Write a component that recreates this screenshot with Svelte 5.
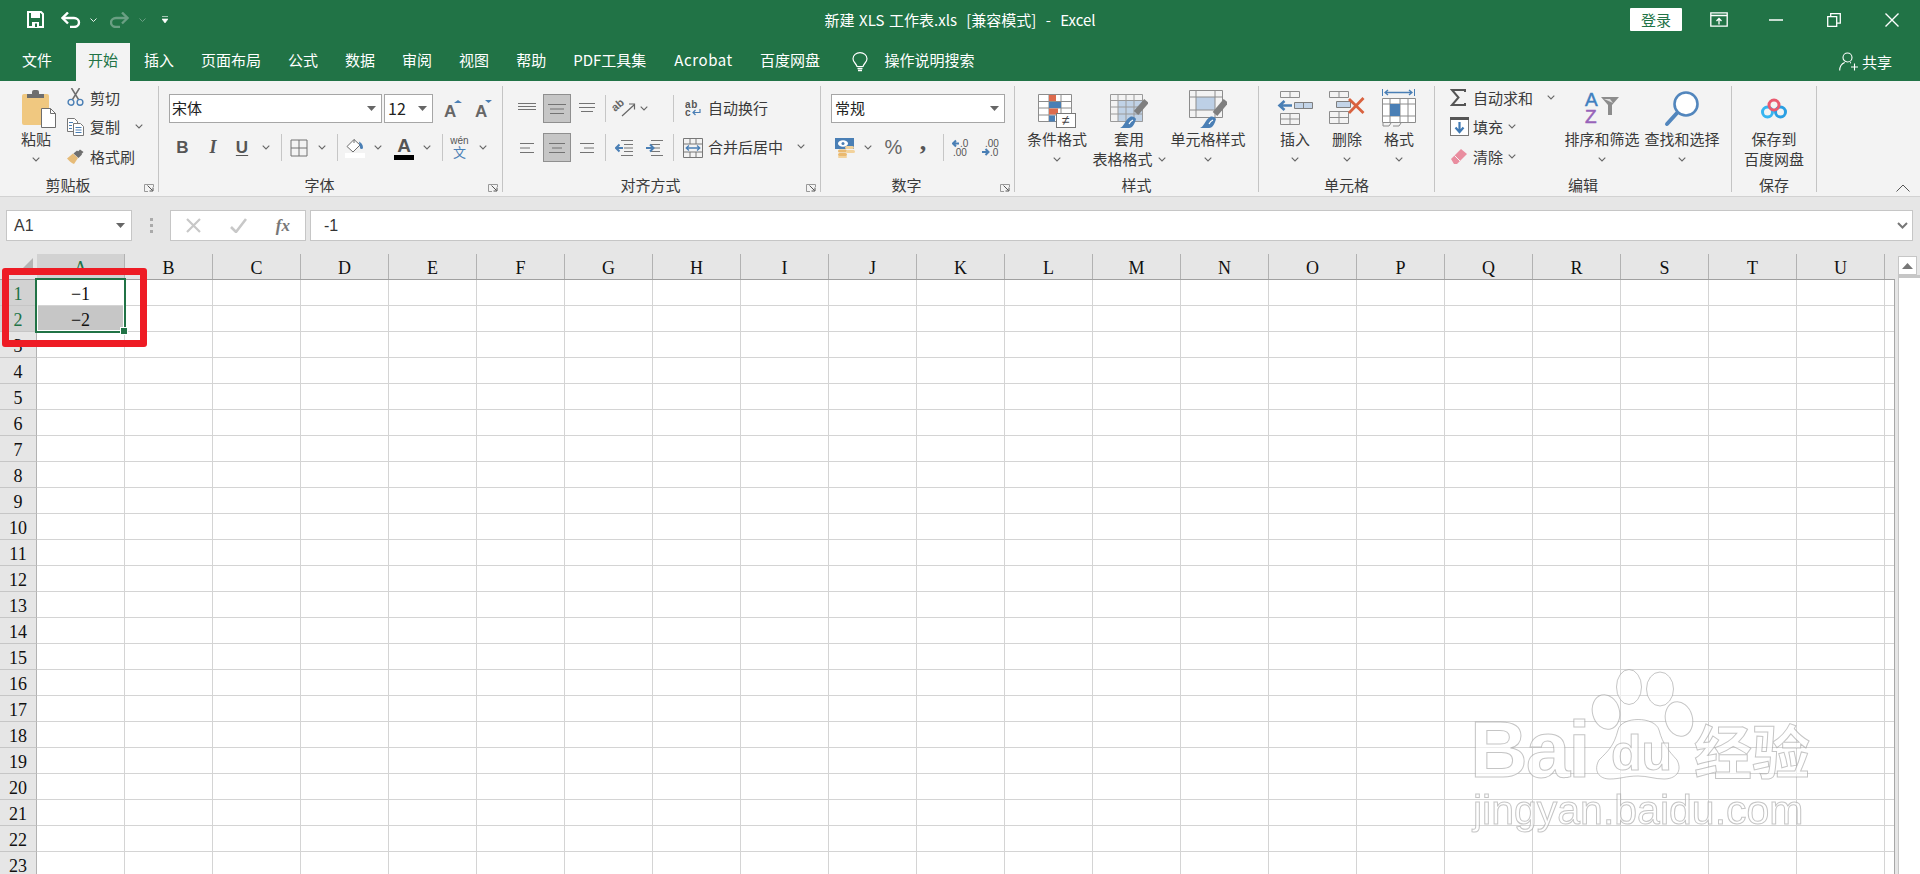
<script>
  const tabs = ["插入", "页面布局", "公式", "数据", "审阅", "视图", "帮助", "PDF工具集", "Acrobat", "百度网盘"];
  const cols = "ABCDEFGHIJKLMNOPQRSTU".split("");
  const rows = Array.from({ length: 23 }, (_, i) => i + 1);

  const lineSets = {
    top: [[0, 18, 1.5], [0, 18, 4.5], [0, 18, 7.5]],
    mid: [[0, 18, 2.5], [2, 16, 7], [2, 16, 11.5]],
    bot: [[1, 17, 1.5], [1, 17, 5.5], [3, 15, 9.5]],
    left: [[2, 16, 2.5], [2, 12, 7], [2, 16, 11.5]],
    center: [[1, 17, 2.5], [4, 14, 7], [1, 17, 11.5]],
    right: [[2, 16, 2.5], [6, 16, 7], [2, 16, 11.5]]
  };
</script>

{#snippet chev()}
  <svg class="chev" width="8" height="5" viewBox="0 0 8 5"><path d="M.7.7 4 4 7.3.7" fill="none" stroke="#666" stroke-width="1.1" /></svg>
{/snippet}

{#snippet caret()}
  <svg width="9" height="5" viewBox="0 0 9 5"><path d="M0 0h9L4.5 5z" fill="#666" /></svg>
{/snippet}

{#snippet launcher()}
  <svg class="launcher" width="10" height="8" viewBox="0 0 10 8"><path d="M9.5 3V.5H.5v7H4" fill="none" stroke="#999" /><path d="M3.5 1.5 8.5 6.500M9 3.500V7H5.500" fill="none" stroke="#555" /></svg>
{/snippet}

{#snippet lines(kind)}
  <svg width="18" height="14" viewBox="0 0 18 14">
    {#each lineSets[kind] as [a, b, y]}
      <path d="M{a} {y}H{b}" stroke="#737373" />
    {/each}
  </svg>
{/snippet}

<div class="app">
  <header class="titlebar">
    <div class="qat">
      <svg class="q-save" width="17" height="17" viewBox="0 0 17 17"><path d="M1 1h13l2 2v13H1z" fill="none" stroke="#fff" stroke-width="2" /><path d="M4 1h9v6H4z" fill="#fff" /><path d="M5 11h7v5H5z" fill="#fff" /><path d="M8 12.500h2V16H8z" fill="#217346" /></svg>
      <svg class="q-undo" width="20" height="16" viewBox="0 0 20 16"><path d="M2 6h11a5 4.500 0 0 1 0 9H9" fill="none" stroke="#fff" stroke-width="2.400" /><path d="M7 .5 1.500 6 7 11.500" fill="none" stroke="#fff" stroke-width="2.400" /></svg>
      <svg class="q-c1" width="7" height="4" viewBox="0 0 7 4"><path d="M.5.5 3.500 3.500 6.500.5" fill="none" stroke="#e6f0ea" /></svg>
      <svg class="q-redo" width="19" height="16" viewBox="0 0 19 16"><path d="M17 6H6a5 4.500 0 0 0 0 9h4" fill="none" stroke="#6a9f83" stroke-width="2.400" /><path d="M12 .5 17.500 6 12 11.500" fill="none" stroke="#6a9f83" stroke-width="2.400" /></svg>
      <svg class="q-c2" width="7" height="4" viewBox="0 0 7 4"><path d="M.5.5 3.500 3.500 6.500.5" fill="none" stroke="#6a9f83" /></svg>
      <svg class="q-more" width="6" height="7" viewBox="0 0 6 7"><path d="M0 .5h6M0 3h6L3 7z" fill="#fff" stroke="#fff" stroke-width=".6" /></svg>
    </div>
    <div class="doc-title">新建 XLS 工作表.xls&nbsp; [兼容模式]&nbsp; -&nbsp; Excel</div>
    <div class="win">
      <button class="login">登录</button>
      <svg class="w-ribbon" width="18" height="15" viewBox="0 0 18 15"><path d="M.8.8h16.400v13.400H.8z" fill="none" stroke="#fff" stroke-width="1.300" /><path d="M.8 3.500h16.400" stroke="#fff" stroke-width="1.500" /><path d="M9 12.500V6.500M6.500 9 9 6.500 11.500 9" fill="none" stroke="#fff" stroke-width="1.300" /></svg>
      <svg class="w-min" width="14" height="2" viewBox="0 0 14 2"><path d="M0 1h14" stroke="#fff" stroke-width="1.500" /></svg>
      <svg class="w-max" width="14" height="14" viewBox="0 0 14 14"><path d="M.7 3.700h9v9.600h-9z" fill="none" stroke="#fff" stroke-width="1.300" /><path d="M3.700 3.500V.7h9.600v9.500h-3.400" fill="none" stroke="#fff" stroke-width="1.300" /></svg>
      <svg class="w-close" width="14" height="14" viewBox="0 0 14 14"><path d="M.5.5l13 13M13.500.5l-13 13" stroke="#fff" stroke-width="1.400" /></svg>
    </div>
  </header>

  <nav class="tabs">
    <div class="tab first">文件</div>
    <div class="tab active">开始</div>
    {#each tabs as t}
      <div class="tab" class:wide={t === "Acrobat"}>{t}</div>
    {/each}
    <svg class="bulb" width="16" height="21" viewBox="0 0 16 21"><path d="M5 14.500C4.500 11.500 1 10.500 1 6.800a7 6.200 0 0 1 14 0c0 3.700-3.500 4.700-4 7.700z" fill="none" stroke="#fff" stroke-width="1.200" /><path d="M5.500 16.500h5M6 18.500h4" stroke="#fff" stroke-width="1.300" /></svg>
    <div class="search">操作说明搜索</div>
    <div class="share">
      <svg width="20" height="19" viewBox="0 0 20 19"><circle cx="8.500" cy="5.500" r="4.500" fill="none" stroke="#fff" stroke-width="1.100" /><path d="M.7 18.500c0-4.500 2.500-7 5-8M11 10.500l1 .5M15.500 11.500v7M12 15h7" fill="none" stroke="#fff" stroke-width="1.100" /></svg>
      <span>共享</span>
    </div>
  </nav>

  <section class="ribbon">
    <!-- 剪贴板 -->
    <div class="group w-clip">
      <div class="body">
        <div class="big paste">
          <div class="ic">
            <svg width="34" height="40" viewBox="0 0 34 40">
              <rect y="5" width="27" height="31" rx="2" fill="#f0c880" />
              <path d="M5 9V5h5V3a2 2 0 0 1 2-2h3a2 2 0 0 1 2 2v2h5v4z" fill="#6e6e6e" />
              <path d="M19.500 19.500h9l5 5v14h-14z" fill="#fff" stroke="#6e6e6e" />
              <path d="M28.500 19.500v5h5" fill="none" stroke="#6e6e6e" />
            </svg>
          </div>
          <div class="ln">粘贴</div>
          <div class="ln">{@render chev()}</div>
        </div>
        <div class="stack clip-stack">
          <div class="row">
            <span class="ri">
              <svg width="17" height="18" viewBox="0 0 17 18"><path d="M5.500 11.500 12.500 0M11.500 11.500 4.500 0" stroke="#6e6e6e" stroke-width="1.500" /><circle cx="4" cy="14.300" r="2.900" fill="none" stroke="#4a7fb5" stroke-width="1.400" /><circle cx="13" cy="14.300" r="2.900" fill="none" stroke="#4a7fb5" stroke-width="1.400" /></svg>
            </span>
            <span>剪切</span>
          </div>
          <div class="row">
            <span class="ri">
              <svg width="17" height="18" viewBox="0 0 17 18"><path d="M.5.5h7l3 3v10h-10z" fill="#fff" stroke="#777" /><path d="M6.500 5.500h7l3 3v9h-10z" fill="#fff" stroke="#777" /><path d="M2 4.500h4M2 7.500h3M2 10.500h3" stroke="#4a7fb5" /><path d="M8.500 9.500h6M8.500 12h6M8.500 14.500h6" stroke="#4a7fb5" /></svg>
            </span>
            <span>复制</span>
            <span class="cm15">{@render chev()}</span>
          </div>
          <div class="row">
            <span class="ri">
              <svg width="17" height="15" viewBox="0 0 17 15"><path d="M0 9.500 6 4.500l5 4.500-4 6c-2-.5-5-3-7-5.500z" fill="#e6bb78" /><path d="M6.500 4.500 10 1.500l5 4-3.500 3.500z" fill="#6e6e6e" /><path d="M10.500 3 13 .5 16.500 3 14 5.500z" fill="#6e6e6e" /></svg>
            </span>
            <span>格式刷</span>
          </div>
        </div>
      </div>
      <div class="label"><span>剪贴板</span>{@render launcher()}</div>
    </div>

    <!-- 字体 -->
    <div class="group w-font">
      <div class="body tools">
        <div class="combos">
          <div class="combo c-font"><span class="face">宋体</span>{@render caret()}</div>
          <div class="combo c-size"><span class="num">12</span>{@render caret()}</div>
          <svg class="grow" width="22" height="24" viewBox="0 0 22 24"><text x="0" y="20" class="aa">A</text><path d="M9 5h8l-4-3z" fill="#4a7fb5" transform="translate(1 1)" /></svg>
          <svg class="shrink" width="22" height="24" viewBox="0 0 22 24"><text x="0" y="20" class="aa">A</text><path d="M10 3h7l-3.500 3z" fill="#4a7fb5" /></svg>
        </div>
        <div class="font-row">
          <span class="b">B</span>
          <span class="i">I</span>
          <span class="u">U</span>
          <span class="cc">{@render chev()}</span>
          <span class="cc"><i class="sep"></i></span>
          <span class="cc"><svg width="18" height="18" viewBox="0 0 18 18"><path d="M1 1h16v16H1zM9 1v16M1 9h16" fill="none" stroke="#737373" /></svg></span>
          <span class="cc">{@render chev()}</span>
          <span class="cc"><i class="sep"></i></span>
          <span class="cc"><svg width="20" height="20" viewBox="0 0 20 20"><path d="M9 1.500 2 8.500l6 5.500 7-7z" fill="#fff" stroke="#6e6e6e" /><path d="M9 1.500V5" stroke="#6e6e6e" /><path d="M14 3.500c2 1 4 3 4 6a1.500 1.500 0 0 1-3 0z" fill="#4a7fb5" /><rect y="15" width="20" height="5" fill="#fff" /></svg></span>
          <span class="cc">{@render chev()}</span>
          <span class="cc color-a"><span class="a-let">A</span><i class="a-bar"></i></span>
          <span class="cc">{@render chev()}</span>
          <span class="cc"><i class="sep"></i></span>
          <span class="cc wen"><span class="wen-t">wén</span><span class="wen-c">文</span></span>
          <span class="cc">{@render chev()}</span>
        </div>
      </div>
      <div class="label"><span>字体</span>{@render launcher()}</div>
    </div>

    <!-- 对齐方式 -->
    <div class="group w-align">
      <div class="body align-grid">
        <span class="cc">{@render lines("top")}</span>
        <span class="cc on">{@render lines("mid")}</span>
        <span class="cc">{@render lines("bot")}</span>
        <span class="cc"><i class="sep"></i></span>
        <span class="cc"><svg width="24" height="24" viewBox="0 0 24 24"><text transform="translate(3 15) rotate(-40)" font-family="Liberation Sans" font-size="11" font-weight="700" fill="#666">ab</text><path d="M10 19 22 8M17 7h5.500v5.500" fill="none" stroke="#666" stroke-width="1.200" /></svg></span>
        <span class="cc start">{@render chev()}</span>
        <span class="cc"><i class="sep"></i></span>
        <span class="cc"><svg width="16" height="18" viewBox="0 0 16 18"><text x="0" y="8" font-family="Liberation Sans" font-size="10" font-weight="700" fill="#555" letter-spacing=".6">ab</text><text x="0" y="16" font-family="Liberation Sans" font-size="10" font-weight="700" fill="#555">c</text><path d="M15 9V12.500H8M10.500 10 8 12.500 10.500 15" fill="none" stroke="#4a7fb5" stroke-width="1.200" /></svg></span>
        <span class="t-wrap">自动换行</span>

        <span class="cc">{@render lines("left")}</span>
        <span class="cc on">{@render lines("center")}</span>
        <span class="cc">{@render lines("right")}</span>
        <span class="cc"><i class="sep"></i></span>
        <span class="cc"><svg width="18" height="16" viewBox="0 0 18 16"><path d="M6 .5h12M9 4.500h9M9 8h9M9 11.500h9M6 15.500h12" stroke="#777" /><path d="M8 8H2M4.500 4.500 1 8l3.500 3.500" fill="none" stroke="#4a7fb5" stroke-width="2" /></svg></span>
        <span class="cc"><svg width="18" height="16" viewBox="0 0 18 16"><path d="M0 .5h12M0 4.500h9M0 8h9M0 11.500h9M0 15.500h12" stroke="#777" transform="translate(6 0)" /><path d="M1 8h7M5 4.500 8.500 8 5 11.500" fill="none" stroke="#4a7fb5" stroke-width="2" /></svg></span>
        <span class="cc"><i class="sep"></i></span>
        <span class="cc"><svg width="20" height="20" viewBox="0 0 20 20"><path d="M.5.5h19v19H.5zM.5 6h19M.5 14h19M7 .5V6M13 .5V6M7 14v5.500M13 14v5.500" fill="none" stroke="#777" /><path d="M3 10h14M6 7.500 3.200 10 6 12.500M14 7.500l2.800 2.500-2.800 2.500" fill="none" stroke="#4a7fb5" stroke-width="1.300" /></svg></span>
        <span class="t-merge"><span>合并后居中</span>{@render chev()}</span>
      </div>
      <div class="label"><span>对齐方式</span>{@render launcher()}</div>
    </div>

    <!-- 数字 -->
    <div class="group w-num">
      <div class="body tools">
        <div class="combos">
          <div class="combo c-num"><span class="face">常规</span>{@render caret()}</div>
        </div>
        <div class="num-row">
          <span class="cc"><svg width="20" height="20" viewBox="0 0 20 20"><rect y="0" width="19" height="11" fill="#4a7fb5" /><ellipse cx="8" cy="5.500" rx="5" ry="3.200" fill="#fff" /><circle cx="8" cy="5.500" r="1.500" fill="#4a7fb5" /><rect x="10" y="8" width="9" height="3" rx="1.500" fill="#f2d29b" /><rect x="3" y="11.500" width="9" height="3" rx="1.500" fill="#eab96f" /><rect x="11" y="12" width="9" height="3" rx="1.500" fill="#f2d29b" /><rect x="3" y="15" width="9" height="3" rx="1.500" fill="#eab96f" /><rect x="3" y="18" width="9" height="2" rx="1" fill="#f2d29b" /></svg></span>
          <span class="cc">{@render chev()}</span>
          <span class="cc pct">%</span>
          <span class="cc cma">,</span>
          <span class="cc"><i class="sep"></i></span>
          <span class="cc"><svg width="18" height="17" viewBox="0 0 18 17"><path d="M7 4.500H1.500M4 1.500 1 4.500l3 3" fill="none" stroke="#4a7fb5" stroke-width="2" /><text x="8" y="8" class="dec">.0</text><text x="1" y="16.500" class="dec">.00</text></svg></span>
          <span class="cc"><svg width="18" height="17" viewBox="0 0 18 17"><text x="4" y="8" class="dec">.00</text><path d="M1 13H7M4.500 10l3 3-3 3" fill="none" stroke="#4a7fb5" stroke-width="2" /><text x="9" y="16.500" class="dec">.0</text></svg></span>
        </div>
      </div>
      <div class="label"><span>数字</span>{@render launcher()}</div>
    </div>

    <!-- 样式 -->
    <div class="group w-style">
      <div class="body styles">
        <div class="big w64">
          <div class="ic">
            <svg width="38" height="40" viewBox="0 0 38 40"><g transform="translate(0 5)">
              <path d="M.5.500h33v27h-33zM.5 7.500h33M.5 14h33M.5 21h33M11 .5v27M23 .5v27" fill="#fff" stroke="#8c8c8c" />
              <rect x="11" y="1" width="7" height="6" fill="#dd6b4d" />
              <rect x="11" y="8" width="12" height="6" fill="#4a7fb5" />
              <rect x="11" y="14.500" width="9" height="6" fill="#dd6b4d" />
              <rect x="11" y="21.500" width="6" height="6" fill="#4a7fb5" />
              <rect x="18.500" y="19.500" width="19" height="14" fill="#fff" stroke="#777" />
              <text x="24" y="31" font-family="Liberation Sans" font-size="14" fill="#444">≠</text>
            </g></svg>
          </div>
          <div class="ln">条件格式</div>
          <div class="ln">{@render chev()}</div>
        </div>
        <div class="big w80">
          <div class="ic">
            <svg width="38" height="40" viewBox="0 0 38 40"><g transform="translate(0 5)">
              <rect x="8" y="6" width="25" height="22" fill="#c0d2e6" />
              <path d="M.5.500h32v27H.5zM.5 6.500h32M.5 13h32M.5 20h32M8 .5v27M16 .5v27M24 .5v27" fill="none" stroke="#9a9a9a" />
              <path d="M36.500 7 26 19" stroke="#7f7f7f" stroke-width="6" />
              <path d="M10 34c4-1 5-8 10-11 2-1 5 0 6 2-1 4-3 9-7 9z" fill="#4a7fb5" />
              <path d="M19 30c1-2 2-3 4-4" fill="none" stroke="#fff" stroke-width="1.200" />
            </g></svg>
          </div>
          <div class="ln">套用</div>
          <div class="ln gap-c"><span>表格格式</span>{@render chev()}</div>
        </div>
        <div class="big w78">
          <div class="ic">
            <svg width="38" height="40" viewBox="0 0 38 40"><g transform="translate(0 1)">
              <rect x="7" y="7" width="19" height="13" fill="#bdd0e6" />
              <path d="M.5.500h33v27H.5zM.5 7h33M.5 20h33M7 .5v27M26 .5v27" fill="none" stroke="#8c8c8c" />
              <path d="M37 11 26 24" stroke="#7f7f7f" stroke-width="6" />
              <path d="M11 38c4-1 5-8 10-11 2-1 5 0 6 2-1 4-3 9-7 9z" fill="#4a7fb5" />
              <path d="M20 34c1-2 2-3 4-4" fill="none" stroke="#fff" stroke-width="1.200" />
            </g></svg>
          </div>
          <div class="ln">单元格样式</div>
          <div class="ln">{@render chev()}</div>
        </div>
      </div>
      <div class="label"><span>样式</span></div>
    </div>

    <!-- 单元格 -->
    <div class="group w-cells">
      <div class="body styles">
        <div class="big w52">
          <div class="ic">
            <svg width="36" height="40" viewBox="0 0 36 40"><g transform="translate(0 2)">
              <path d="M3.500.5h19v6h-19zM13 .5v6" fill="none" stroke="#8c8c8c" />
              <path d="M17.500 11.500h18v6h-18z" fill="#c3d4e8" stroke="#7f7f7f" /><path d="M26.500 11.500v6" stroke="#7f7f7f" />
              <path d="M15 14.500H3M7.500 10 2.500 14.500 7.500 19" fill="none" stroke="#4a7fb5" stroke-width="2.600" />
              <path d="M3.500 22.500h19v11h-19zM3.500 28h19M13 22.500v11" fill="none" stroke="#8c8c8c" />
            </g></svg>
          </div>
          <div class="ln">插入</div>
          <div class="ln">{@render chev()}</div>
        </div>
        <div class="big w52">
          <div class="ic">
            <svg width="36" height="40" viewBox="0 0 36 40"><g transform="translate(0 2)">
              <path d="M.5.500h19v6H.5zM10 .5v6" fill="none" stroke="#8c8c8c" />
              <path d="M7.500 10.500h14v6h-14z" fill="#c3d4e8" stroke="#7f7f7f" />
              <path d="M.5 20.500h19v12H.5zM.5 26.500h19M10 20.500v12" fill="none" stroke="#8c8c8c" />
              <path d="M20 8 34.500 22M34.500 7 20 22" stroke="#d9623f" stroke-width="2.800" />
            </g></svg>
          </div>
          <div class="ln">删除</div>
          <div class="ln">{@render chev()}</div>
        </div>
        <div class="big w52">
          <div class="ic">
            <svg width="34" height="40" viewBox="0 0 34 40">
              <path d="M.5 0v7M32.500 0v7" stroke="#4a7fb5" />
              <path d="M3 3.500h27M6 1 3 3.500 6 6M27 1l3 2.500L27 6" fill="none" stroke="#4a7fb5" stroke-width="1.300" />
              <path d="M.5 9.500h33v24H.5zM.5 15h33M.5 27h33M8 9.500v24M18 9.500v24M26 9.500v24" fill="#fff" stroke="#8c8c8c" />
              <rect x="8" y="15" width="10" height="12" fill="#4a7fb5" />
              <path d="M1 34v3h6l2-3M11 37h6l2-3" fill="none" stroke="#8c8c8c" />
            </svg>
          </div>
          <div class="ln">格式</div>
          <div class="ln">{@render chev()}</div>
        </div>
      </div>
      <div class="label"><span>单元格</span></div>
    </div>

    <!-- 编辑 -->
    <div class="group w-edit">
      <div class="body">
        <div class="stack edit-stack">
          <div class="row">
            <span class="ri"><svg width="16" height="17" viewBox="0 0 16 17"><path d="M15 3V1H2l6.500 7.500L2 16h13v-2" fill="none" stroke="#555" stroke-width="2" /></svg></span>
            <span>自动求和</span>
            <span class="cm14">{@render chev()}</span>
          </div>
          <div class="row">
            <span class="ri"><svg width="19" height="19" viewBox="0 0 19 19"><rect x=".5" y=".5" width="18" height="18" fill="#fff" stroke="#777" /><rect width="19" height="3" fill="#555" /><path d="M9.500 5v10M5.500 10.500l4 4.500 4-4.500" fill="none" stroke="#3f79b3" stroke-width="2.200" /></svg></span>
            <span>填充</span>
            <span class="cm5">{@render chev()}</span>
          </div>
          <div class="row">
            <span class="ri"><svg width="17" height="16" viewBox="0 0 17 16"><path d="M1 11 11 1l6 5-10 10H4z" fill="#e98d9f" /><path d="M4.500 7.500 10 13" stroke="#f5f5f5" /></svg></span>
            <span>清除</span>
            <span class="cm5">{@render chev()}</span>
          </div>
        </div>
        <div class="big w80 sort">
          <div class="ic">
            <svg width="36" height="40" viewBox="0 0 36 40"><text x="1" y="17" font-family="Liberation Sans" font-size="19" font-weight="400" fill="#3f7fbf" stroke="#3f7fbf" stroke-width=".5">A</text><text x="1" y="34" font-family="Liberation Sans" font-size="19" fill="#9763b9" stroke="#9763b9" stroke-width=".5">Z</text><path d="M17 8h18l-7 8v10h-4V16z" fill="#8c8c8c" /><path d="M20 10h6l3 4z" fill="#ddd" /></svg>
          </div>
          <div class="ln">排序和筛选</div>
          <div class="ln">{@render chev()}</div>
        </div>
        <div class="big w80">
          <div class="ic">
            <svg width="36" height="40" viewBox="0 0 36 40"><circle cx="22" cy="15" r="11.500" fill="#fff" stroke="#5286bd" stroke-width="2.600" /><path d="M13 24 3 35" stroke="#5286bd" stroke-width="4" stroke-linecap="round" /></svg>
          </div>
          <div class="ln">查找和选择</div>
          <div class="ln">{@render chev()}</div>
        </div>
      </div>
      <div class="label"><span>编辑</span></div>
    </div>

    <!-- 保存 -->
    <div class="group w-save">
      <div class="body styles">
        <div class="big w84">
          <div class="ic">
            <svg width="28" height="40" viewBox="0 0 28 40"><circle cx="7.500" cy="23" r="5" fill="none" stroke="#37b5f0" stroke-width="3" /><circle cx="20.500" cy="23" r="5" fill="none" stroke="#2a9fe3" stroke-width="3" /><circle cx="14" cy="16" r="5" fill="none" stroke="#e9596f" stroke-width="3" /></svg>
          </div>
          <div class="ln">保存到</div>
          <div class="ln">百度网盘</div>
        </div>
      </div>
      <div class="label"><span>保存</span></div>
    </div>

    <svg class="collapse" width="14" height="8" viewBox="0 0 14 8"><path d="M.5 7.500 7 1l6.500 6.500" fill="none" stroke="#555" /></svg>
  </section>

  <section class="formula">
    <div class="namebox"><span>A1</span>{@render caret()}</div>
    <div class="dots"><i></i><i></i><i></i></div>
    <div class="fbtns">
      <svg width="15" height="15" viewBox="0 0 15 15"><path d="M1 1l13 13M14 1 1 14" stroke="#c8c8c8" stroke-width="2.200" /></svg>
      <svg width="17" height="15" viewBox="0 0 17 15"><path d="M1 9l5 5L16 1" fill="none" stroke="#c8c8c8" stroke-width="2.600" /></svg>
      <span class="fx">fx</span>
    </div>
    <div class="finput">
      <span>-1</span>
      <svg width="11" height="7" viewBox="0 0 11 7"><path d="M1 1l4.500 4.500L10 1" fill="none" stroke="#777" stroke-width="2" /></svg>
    </div>
  </section>

  <section class="sheet">
    <div class="gridarea">
      <div class="colhead">
        <div class="corner"><svg width="17" height="17" viewBox="0 0 17 17"><path d="M17 0v17H0z" fill="#b4b4b4" /></svg></div>
        {#each cols as c}
          <div class="ch" class:sel={c === "A"}>{c}</div>
        {/each}
        <div class="ch-tail"></div>
      </div>
      {#each rows as r}
        <div class="gridrow">
          <div class="rh" class:sel={r < 3}>{r}</div>
          {#each cols as c}
            <div class="cell" class:grey={c === "A" && r === 2}>
              {#if c === "A" && r === 1}−1{:else if c === "A" && r === 2}−2{/if}
            </div>
          {/each}
          <div class="row-tail"></div>
        </div>
      {/each}
      <div class="selection"><i class="handle"></i></div>
    </div>
    <div class="vscroll">
      <div class="sb-up"><svg width="11" height="6" viewBox="0 0 11 6"><path d="M5.500 0 11 6H0z" fill="#777" /></svg></div>
      <div class="sb-track"></div>
    </div>
    <svg class="watermark" width="360" height="175" viewBox="0 0 360 175">
      <g class="wm">
        <ellipse cx="159" cy="25" rx="12.500" ry="17.500" />
        <ellipse cx="190" cy="27" rx="13.500" ry="17" />
        <ellipse cx="136" cy="50" rx="13.500" ry="17.500" transform="rotate(-15 136 50)" />
        <ellipse cx="209" cy="57" rx="13.500" ry="17.500" transform="rotate(-15 209 57)" />
        <path d="M129 98c9-9 15-14 19-30 3-14 37-14 41 0 4 15 10 21 18 30 6 12-2 19-13 19-10 0-16-3-26-3-12 0-18 3-28 3-11 0-17-8-11-19z" />
        <text x="0" y="115" class="wm-big">Bai</text>
        <text x="141" y="108" class="wm-du">du</text>
        <text x="224" y="112" class="wm-cn">经验</text>
        <text x="3" y="162" class="wm-url">jingyan.baidu.com</text>
      </g>
    </svg>
  </section>

  <div class="redbox"></div>
</div>

<style>
  :global(body) {
    margin: 0;
    overflow: hidden;
  }

  .app {
    position: relative;
    width: 1920px;
    height: 874px;
    overflow: hidden;
    display: flex;
    flex-direction: column;
    background: #e6e6e6;
    font-family: "Noto Sans CJK SC", "Liberation Sans", sans-serif;
    font-size: 15px;
    color: #3a3a3a;
  }

  svg {
    display: block;
    flex: none;
  }

  /* title bar */
  .titlebar {
    height: 42px;
    box-sizing: border-box;
    padding-bottom: 3px;
    flex: none;
    background: #217346;
    display: grid;
    grid-template-columns: 1fr auto 1fr;
    align-items: center;
    color: #fff;
  }

  .qat {
    display: flex;
    align-items: center;
    padding-left: 27px;
  }

  .q-undo { margin-left: 17px; }
  .q-c1 { margin-left: 9px; }
  .q-redo { margin-left: 13px; }
  .q-c2 { margin-left: 10px; }
  .q-more { margin-left: 16px; }

  .doc-title {
    font-size: 15px;
    word-spacing: 1.3px;
    line-height: 36px;
    white-space: nowrap;
  }

  .win {
    display: flex;
    align-items: center;
    justify-content: flex-end;
    padding-right: 21px;
  }

  .login {
    width: 52px;
    height: 23px;
    margin-right: 28px;
    border: none;
    padding: 0;
    background: #fff;
    color: #217346;
    font: inherit;
    line-height: 23px;
    border-radius: 1px;
  }

  .w-min { margin-left: 41px; }
  .w-max { margin-left: 44px; }
  .w-close { margin-left: 44px; }

  /* tabs */
  .tabs {
    height: 38px;
    padding-top: 1px;
    flex: none;
    background: #217346;
    display: flex;
    align-items: stretch;
    color: #fff;
  }

  .tab {
    padding: 0 13.5px 6px;
    display: flex;
    align-items: center;
    white-space: nowrap;
  }

  .tab.wide {
    letter-spacing: .6px;
    padding-left: 14.5px;
  }

  .tab.first {
    margin-left: 8.5px;
    margin-right: 10px;
    padding-right: 14px;
  }

  .tab.active {
    padding: 0 12px 6px;
    background: #f3f3f3;
    color: #217346;
    margin-right: 0;
  }

  .tab.active + .tab {
    padding-left: 14px;
  }

  .bulb {
    margin-left: 19px;
    margin-top: 9px;
  }

  .search {
    margin-left: 16px;
    display: flex;
    align-items: center;
    padding-bottom: 6px;
    font-size: 15px;
  }

  .share {
    margin-left: auto;
    padding: 0 28px 2px 0;
    display: flex;
    align-items: center;
    gap: 3px;
  }

  /* ribbon */
  .ribbon {
    position: relative;
    height: 116px;
    box-sizing: border-box;
    flex: none;
    padding-top: 5px;
    display: flex;
    background: #f3f3f3;
    border-bottom: 1px solid #d2d2d2;
  }

  .group {
    height: 106px;
    flex: none;
    box-sizing: border-box;
    border-right: 1px solid #c4c4c4;
    display: flex;
    flex-direction: column;
  }

  .w-clip { width: 159px; }
  .w-font { width: 344px; }
  .w-align { width: 318px; }
  .w-num { width: 194px; }
  .w-style { width: 244px; }
  .w-cells { width: 176px; }
  .w-edit { width: 297px; }
  .w-save { width: 85px; }

  .body {
    height: 90px;
    flex: none;
    display: flex;
  }

  .label {
    height: 20px;
    flex: none;
    display: flex;
    align-items: center;
    line-height: 20px;
    white-space: nowrap;
  }

  .label span {
    flex: 1;
    text-align: center;
    margin-top: -2px;
  }

  .launcher {
    margin: 3px 4px 0 8px;
  }

  .big {
    flex: none;
    display: flex;
    flex-direction: column;
    align-items: center;
    white-space: nowrap;
  }

  .ic {
    height: 43px;
    display: flex;
    align-items: flex-end;
  }

  .ln {
    height: 20px;
    line-height: 20px;
    display: flex;
    align-items: center;
  }

  .gap-c { gap: 5px; }

  .paste {
    width: 52px;
    margin-left: 10px;
  }

  .paste .ic {
    padding-left: 6px;
  }

  .stack {
    display: flex;
    flex-direction: column;
    gap: 5.5px;
  }

  .clip-stack {
    margin-left: 5px;
  }

  .row {
    height: 24px;
    box-sizing: border-box;
    padding-bottom: 2px;
    display: flex;
    align-items: center;
    white-space: nowrap;
  }

  .ri {
    width: 23px;
    flex: none;
  }

  .cm15 { margin-left: 15px; }
  .cm14 { margin-left: 14px; }
  .cm5 { margin-left: 5px; }

  .tools {
    flex-direction: column;
    padding: 8px 0 0 10px;
    box-sizing: border-box;
  }

  .combos {
    height: 29px;
    display: flex;
    align-items: center;
    gap: 2px;
  }

  .combo {
    height: 29px;
    box-sizing: border-box;
    border: 1px solid #a6a6a6;
    background: #fff;
    display: flex;
    align-items: center;
    justify-content: space-between;
    padding: 0 5px 0 2px;
    flex: none;
    color: #222;
  }

  .c-font { width: 213px; }
  .c-size { width: 49px; padding-left: 3px; }
  .c-num { width: 174px; padding-left: 3px; }

  .face, .num {
    margin-top: -2px;
  }

  .face { font-size: 15px; }
  .num { font-size: 16px; }

  .grow { margin-left: 9px; }
  .shrink { margin-left: 7px; }

  .aa {
    font-family: "Liberation Sans", sans-serif;
    font-size: 17px;
    font-weight: 700;
    fill: #666;
  }

  .font-row {
    margin: 10px 0 0 -2px;
    height: 29px;
    display: grid;
    grid-template-columns: 31px 30px 28px 20px 10px 25px 22px 8px 28px 18px 34px 12px 18px 17px 30px;
    align-items: center;
    justify-items: center;
  }

  .cc {
    display: flex;
    align-items: center;
    justify-content: center;
    height: 29px;
  }

  .sep {
    display: block;
    width: 1px;
    height: 27px;
    background: #c6c6c6;
  }

  .b, .i, .u {
    font-family: "Liberation Sans", sans-serif;
    font-size: 17px;
    font-weight: 700;
    color: #555;
    line-height: 29px;
  }

  .i {
    font-style: italic;
    font-family: "Liberation Serif", serif;
    font-size: 18px;
  }

  .u {
    text-decoration: underline;
    text-underline-offset: 2px;
  }

  .color-a {
    flex-direction: column;
    justify-content: flex-end;
    height: 24px;
  }

  .a-let {
    font-family: "Liberation Sans", sans-serif;
    font-size: 19px;
    font-weight: 700;
    color: #555;
    line-height: 17px;
  }

  .a-bar {
    display: block;
    width: 20px;
    height: 5px;
    background: #000;
    margin-top: 1px;
  }

  .wen {
    flex-direction: column;
    height: 20px;
  }

  .wen-t {
    font-family: "Liberation Sans", sans-serif;
    font-size: 10px;
    line-height: 8px;
    color: #555;
  }

  .wen-c {
    font-size: 13px;
    line-height: 13px;
    color: #4a7fb5;
  }

  .align-grid {
    display: grid;
    grid-template-columns: 30px 30px 30px 6px 32px 28px 10px 30px auto;
    grid-template-rows: 29px 29px;
    row-gap: 10px;
    padding: 8px 0 0 9px;
    box-sizing: border-box;
    align-items: center;
  }

  .on {
    margin: 0 1px;
    background: #c6c6c6;
    box-shadow: inset 0 0 0 1px #8f8f8f;
  }

  .start {
    justify-content: flex-start;
  }

  .t-wrap {
    white-space: nowrap;
    margin-top: -2px;
  }

  .t-merge {
    display: flex;
    align-items: center;
    gap: 14px;
    white-space: nowrap;
    margin-top: -2px;
  }

  .num-row {
    margin-top: 10px;
    display: grid;
    grid-template-columns: 27px 20px 31px 28px 12px 24px 34px;
    align-items: center;
    justify-items: center;
  }

  .pct {
    font-family: "Liberation Sans", sans-serif;
    font-size: 20px;
    color: #666;
  }

  .cma {
    font-family: "Liberation Serif", serif;
    font-size: 26px;
    font-weight: 700;
    color: #555;
    padding-bottom: 12px;
    height: 17px;
  }

  .dec {
    font-family: "Liberation Sans", sans-serif;
    font-size: 10px;
    fill: #555;
  }

  .styles {
    padding-left: 10px;
  }

  .w52 { width: 52px; }
  .w64 { width: 64px; }
  .w78 { width: 78px; }
  .w80 { width: 80px; }
  .w84 { width: 64px; }

  .edit-stack {
    width: 112px;
    flex: none;
    margin-left: 15px;
  }

  .w-save .styles {
    justify-content: center;
    padding: 0;
  }

  .collapse {
    position: absolute;
    left: 1896px;
    top: 103px;
  }

  /* formula bar */
  .formula {
    height: 57px;
    box-sizing: border-box;
    flex: none;
    padding: 13px 7px 13px 6px;
    display: flex;
    background: #e6e6e6;
  }

  .namebox, .fbtns, .finput {
    height: 31px;
    box-sizing: border-box;
    border: 1px solid #c6c6c6;
    background: #fff;
    display: flex;
    align-items: center;
  }

  .namebox {
    width: 126px;
    justify-content: space-between;
    padding: 0 6px 0 7px;
    font-family: "Liberation Sans", sans-serif;
    font-size: 16px;
  }

  .dots {
    width: 38px;
    display: flex;
    flex-direction: column;
    align-items: center;
    justify-content: center;
    gap: 3px;
  }

  .dots i {
    display: block;
    width: 3px;
    height: 3px;
    background: #aaa;
  }

  .fbtns {
    width: 136px;
    padding: 0 15px;
    justify-content: space-between;
  }

  .fx {
    font-family: "Liberation Serif", serif;
    font-style: italic;
    font-weight: 700;
    font-size: 17px;
    color: #777;
  }

  .finput {
    flex: 1;
    margin-left: 4px;
    padding: 0 4px 0 13px;
    justify-content: space-between;
    font-family: "Liberation Sans", sans-serif;
    font-size: 16px;
    color: #333;
  }

  /* sheet */
  .sheet {
    position: relative;
    flex: 1;
    display: flex;
    min-height: 0;
  }

  .gridarea {
    position: relative;
    width: 1895px;
    flex: none;
    box-sizing: border-box;
    border-right: 1px solid #a8a8a8;
    background: #fff;
  }

  .colhead, .gridrow {
    display: flex;
    height: 26px;
    font-family: "Liberation Serif", serif;
    font-size: 18px;
    color: #111;
  }

  .colhead {
    box-sizing: border-box;
    background: #e6e6e6;
    border-bottom: 1px solid #a0a0a0;
    margin-right: -1px;
  }

  .corner {
    width: 37px;
    flex: none;
    box-sizing: border-box;
    padding: 4px 0 0 16px;
  }

  .ch {
    width: 88px;
    flex: none;
    box-sizing: border-box;
    border-right: 1px solid #b2b2b2;
    text-align: center;
    padding-top: 4px;
    line-height: 21px;
  }

  .ch.sel {
    background: #d2d2d2;
    color: #217346;
  }

  .ch-tail {
    flex: 1;
    background: #e6e6e6;
  }

  .rh {
    width: 37px;
    flex: none;
    box-sizing: border-box;
    background: #e6e6e6;
    border-right: 1px solid #b2b2b2;
    border-bottom: 1px solid #c6c6c6;
    text-align: center;
    padding-top: 4px;
    line-height: 21px;
  }

  .rh.sel {
    background: #d2d2d2;
    color: #217346;
  }

  .cell {
    width: 88px;
    flex: none;
    box-sizing: border-box;
    border-right: 1px solid #d4d4d4;
    border-bottom: 1px solid #d4d4d4;
    text-align: center;
    padding-top: 4px;
    line-height: 21px;
  }

  .cell.grey {
    background: #c6c6c6;
  }

  .row-tail {
    flex: 1;
    box-sizing: border-box;
    border-bottom: 1px solid #d4d4d4;
  }

  .selection {
    position: absolute;
    left: 35px;
    top: 24px;
    width: 91px;
    height: 55px;
    box-sizing: border-box;
    border: 2px solid #217346;
    box-shadow: inset 0 0 0 1px #fff;
  }

  .handle {
    position: absolute;
    right: -3px;
    bottom: -3px;
    width: 6px;
    height: 6px;
    background: #217346;
    box-shadow: 0 0 0 1px #fff;
  }

  .vscroll {
    margin-left: 3px;
    width: 22px;
    display: flex;
    flex-direction: column;
    padding-top: 2px;
    box-sizing: border-box;
  }

  .sb-up {
    width: 19px;
    height: 19px;
    box-sizing: border-box;
    border: 1px solid #c6c6c6;
    background: #fff;
    display: flex;
    align-items: center;
    justify-content: center;
  }

  .sb-track {
    flex: 1;
    background: #fff;
    margin-right: -3px;
    border-top: 3px solid #c6c6c6;
    border-left: 1px solid #c6c6c6;
  }

  .watermark {
    position: absolute;
    left: 1470px;
    top: 408px;
    pointer-events: none;
    filter: blur(0.5px);
  }

  .wm * {
    fill: rgba(255, 255, 255, 0.55);
    stroke: rgba(150, 150, 150, 0.55);
    stroke-width: 1;
  }

  .wm-big {
    font-family: "Liberation Sans", sans-serif;
    font-weight: 700;
    font-size: 80px;
    letter-spacing: -2px;
  }

  .wm-du {
    font-family: "Liberation Sans", sans-serif;
    font-weight: 700;
    font-size: 50px;
  }

  .wm-cn {
    font-family: "Noto Sans CJK SC", sans-serif;
    font-weight: 700;
    font-size: 58px;
  }

  .wm-url {
    font-family: "Liberation Sans", sans-serif;
    font-size: 41px;
    letter-spacing: 0;
  }

  /* annotation */
  .redbox {
    position: absolute;
    left: 2px;
    top: 268px;
    width: 145px;
    height: 79px;
    box-sizing: border-box;
    border: 7px solid #ee1c25;
    border-radius: 3px;
  }
</style>
